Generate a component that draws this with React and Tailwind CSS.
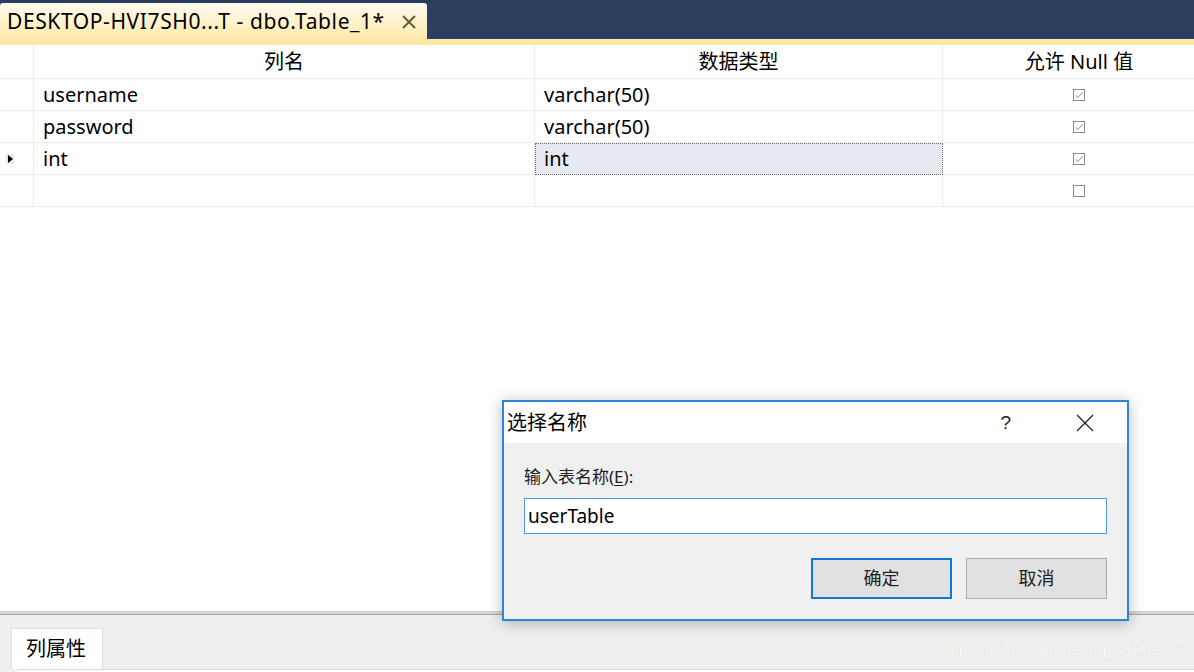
import React from "react";

const FONT = { fontFamily: '"Noto Sans", "Noto Sans CJK SC", sans-serif' };

function Check({ checked }) {
  return (
    <svg width="12" height="12" viewBox="0 0 12 12" className="block">
      <rect x="0.5" y="0.5" width="11" height="11" fill="#fff" stroke="#8a8a8a" />
      {checked && <path d="M2.5 6.2 L5 8.6 L9.6 3.2" fill="none" stroke="#8a8a8a" strokeWidth="1" />}
    </svg>
  );
}

const rows = [
  { name: "username", type: "varchar(50)", nul: true },
  { name: "password", type: "varchar(50)", nul: true },
  { name: "int", type: "int", nul: true, current: true },
  { name: "", type: "", nul: false },
];

export default function App() {
  return (
    <div className="relative w-[1194px] h-[672px] overflow-hidden bg-white text-black" style={FONT}>
      <div className="flex flex-col h-full">
        {/* top document tab bar */}
        <div className="h-[39px] bg-[#2c3d5d] flex items-end shrink-0">
          <div className="w-[427px] h-[36px] rounded-t-[3px] bg-gradient-to-b from-[#fffbf0] to-[#ffe9a9] flex items-center pl-[7px] pr-[10px]">
            <span className="text-[21px] leading-none tracking-[0.6px] whitespace-nowrap">DESKTOP-HVI7SH0...T - dbo.Table_1*</span>
            <svg width="16" height="16" viewBox="0 0 16 16" className="ml-auto mt-[2px]">
              <path d="M2 2 L14 14 M14 2 L2 14" stroke="#6b5c3a" strokeWidth="2" />
            </svg>
          </div>
        </div>
        <div className="h-[6px] bg-[#ffe8a6] shrink-0" />

        {/* grid */}
        <div className="shrink-0 grid grid-cols-[34px_501px_408px_272px] text-[20px] leading-none">
          <div className="h-[34px] border-r border-b border-[#ececec]" />
          <div className="h-[34px] border-r border-b border-[#ececec] flex items-center justify-center">列名</div>
          <div className="h-[34px] border-r border-b border-[#ececec] flex items-center justify-center">数据类型</div>
          <div className="h-[34px] border-b border-[#ececec] flex items-center justify-center">允许 Null 值</div>
          {rows.map((r, i) => (
            <React.Fragment key={i}>
              <div className="h-[32px] border-r border-b border-[#ececec] flex items-center pl-[6px]">
                {r.current && (
                  <div className="w-[8px] h-[10px] bg-[#e8e8e8] flex items-center justify-center">
                    <svg width="5" height="8" viewBox="0 0 5 8"><path d="M0 0 L5 4 L0 8 Z" fill="#000" /></svg>
                  </div>
                )}
              </div>
              <div className="h-[32px] border-r border-b border-[#ececec] flex items-center pl-[9px]">{r.name}</div>
              {r.current ? (
                <div className="h-[32px] bg-[#e6eaf0] border border-dotted border-[#6e6e6e] flex items-center pl-[8px]">{r.type}</div>
              ) : (
                <div className="h-[32px] border-r border-b border-[#ececec] flex items-center pl-[9px]">{r.type}</div>
              )}
              <div className="h-[32px] border-b border-[#ececec] flex items-center justify-center">
                <Check checked={r.nul} />
              </div>
            </React.Fragment>
          ))}
        </div>

        <div className="flex-1 bg-white" />

        {/* bottom properties panel */}
        <div className="h-[61px] shrink-0 bg-[#efefef] border-t-[3px] border-[#d4d4d4] flex flex-col">
          <div className="border-t border-[#a8a8a8]" />
          <div className="flex-1 flex items-end pl-[11px]">
            <div className="w-[92px] h-[41px] bg-white border border-b-0 border-[#e0e0e0] flex items-center pl-[14px] text-[20px]">列属性</div>
          </div>
          <div className="h-[3px] border-t border-[#d8d8d8] ml-[18px] bg-white" />
        </div>
      </div>

      {/* watermark */}
      <div
        className="absolute left-[941px] top-[642px] text-[16px] leading-none text-[#fafafa] whitespace-nowrap"
        style={{ fontFamily: '"Liberation Sans", Arial, sans-serif', textShadow: "0 0 1px rgba(0,0,0,0.14)" }}
      >
        https://blog.csdn.net/qq_41569732
      </div>

      {/* dialog */}
      <div className="absolute left-[502px] top-[400px] w-[627px] h-[221px] border-2 border-[#2b86d6] bg-[#f0f0f0] shadow-[0_2px_14px_rgba(0,0,0,0.28)] flex flex-col">
        <div className="h-[41px] bg-white flex items-center pl-[3px] shrink-0">
          <span className="text-[20px] leading-none">选择名称</span>
          <span className="ml-auto mr-[65px] text-[19px] leading-none text-[#222]" style={{ fontFamily: '"Liberation Sans", sans-serif' }}>?</span>
          <svg width="18" height="18" viewBox="0 0 18 18" className="mr-[33px]">
            <path d="M1 1 L17 17 M17 1 L1 17" stroke="#222" strokeWidth="1.3" />
          </svg>
        </div>
        <div className="flex-1 px-[20px] pt-[25px] flex flex-col">
          <div className="text-[17px] leading-none text-[#222]">
            输入表名称(<span className="underline underline-offset-2">E</span>):
          </div>
          <div className="mt-[13px] h-[36px] bg-white border border-[#4b9de6] flex items-center pl-[3px] text-[19px]">userTable</div>
          <div className="mt-[24px] flex justify-end gap-[14px]">
            <button className="w-[141px] h-[41px] bg-[#e1e1e1] border-2 border-[#0f78d6] text-[18px] text-[#222]">确定</button>
            <button className="w-[141px] h-[41px] bg-[#e1e1e1] border border-[#adadad] text-[18px] text-[#222]">取消</button>
          </div>
        </div>
      </div>
    </div>
  );
}
